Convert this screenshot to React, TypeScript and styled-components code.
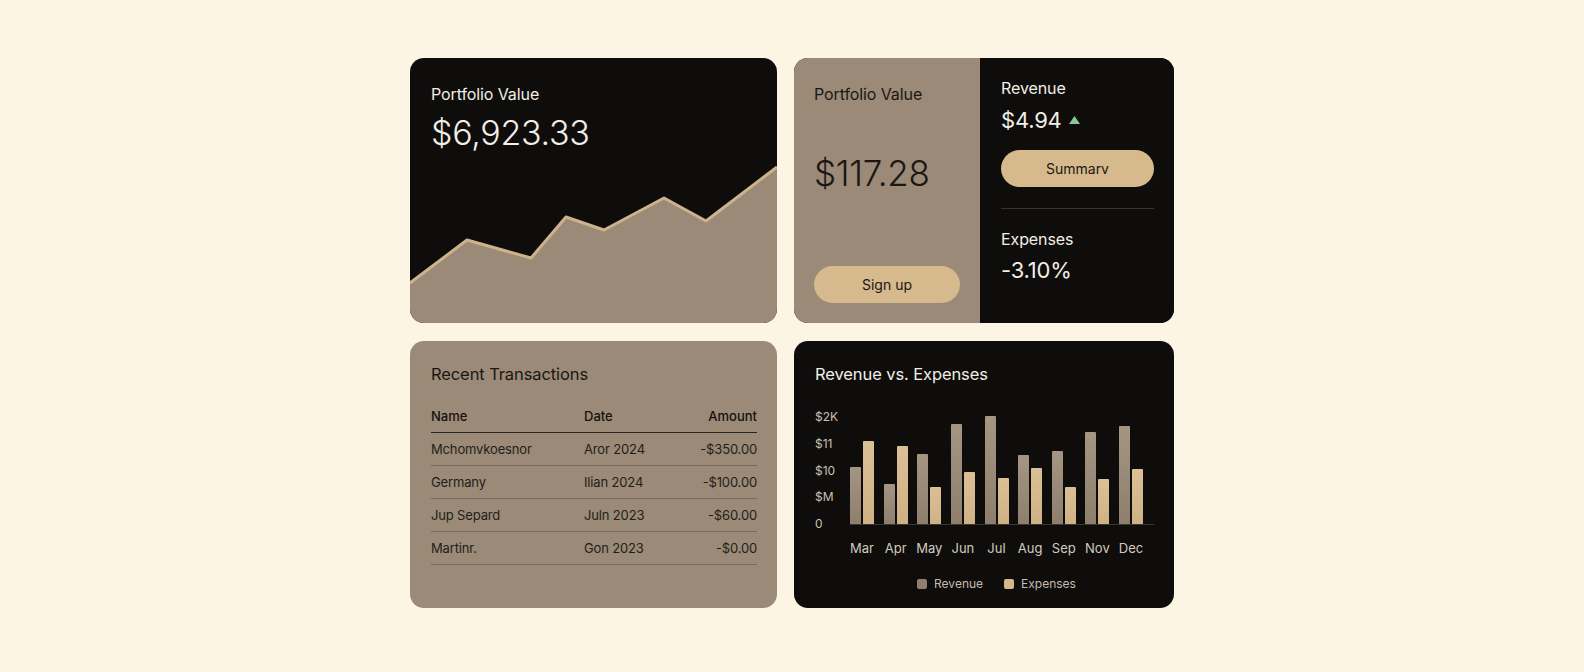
import React from 'react';
import styled, {createGlobalStyle} from 'styled-components';

const GlobalStyle = createGlobalStyle`
  body {
    margin: 0;
    background: #fcf5e4;
    font-family: Inter, "Noto Sans", "Liberation Sans", sans-serif;
    -webkit-font-smoothing: antialiased;
  }
`;

const DARK = '#0e0d0c';
const TAN = '#9a8a77';
const SAND = '#d6b98c';

const Page = styled.div`
  min-height: 672px;
  display: flex;
  justify-content: center;
  padding-top: 58px;
  box-sizing: border-box;
`;

const Grid = styled.div`
  display: grid;
  grid-template-columns: 367px 380px;
  grid-template-rows: 265px 267px;
  column-gap: 17px;
  row-gap: 18px;
`;

const Card = styled.div<{$tone: 'dark' | 'tan'}>`
  border-radius: 14px;
  overflow: hidden;
  background: ${(p) => (p.$tone === 'dark' ? DARK : TAN)};
  color: ${(p) => (p.$tone === 'dark' ? '#f2ede5' : '#1b1713')};
  display: flex;
  flex-direction: column;
`;

const Label = styled.div`
  font-size: 16px;
  line-height: 20px;
  letter-spacing: -0.1px;
`;

const BigValue = styled.div`
  font-size: 34px;
  line-height: 38px;
  font-weight: 300;
  letter-spacing: -0.3px;
`;

const MidValue = styled.div`
  font-size: 22px;
  line-height: 28px;
  font-weight: 400;
  letter-spacing: -0.2px;
  display: flex;
  align-items: center;
  gap: 7px;
`;

// portfolio card (top left)
const Head = styled.div`
  padding: 26px 21px 0;
  display: flex;
  flex-direction: column;
  gap: 10px;
`;

const AreaChart = styled.svg`
  display: block;
  width: 100%;
  height: 170px;
  margin-top: auto;
`;

// split card (top right)
const Split = styled.div`
  display: grid;
  grid-template-columns: 186px 1fr;
  height: 100%;
`;

const TanPane = styled.div`
  background: ${TAN};
  color: #1b1713;
  padding: 26px 20px 20px;
  display: flex;
  flex-direction: column;
`;

const DarkPane = styled.div`
  background: ${DARK};
  color: #f2ede5;
  padding: 20px 20px 0 21px;
  display: flex;
  flex-direction: column;
`;

const PaneValue = styled(BigValue)`
  margin-top: 48px;
  font-size: 35px;
  line-height: 42px;
  font-weight: 350;
`;

const Pill = styled.button<{$push?: boolean}>`
  height: 37px;
  width: 100%;
  border: none;
  border-radius: 999px;
  background: ${SAND};
  color: #1b1713;
  font-family: inherit;
  font-size: 14px;
  margin-top: ${(p) => (p.$push ? 'auto' : '16px')};
`;

const Divider = styled.div`
  height: 1px;
  background: #38332d;
  margin: 21px 0 20px;
`;

const Up = styled.svg`
  width: 11px;
  height: 8px;
`;

// transactions card
const Body = styled.div`
  padding: 23px 20px 0 21px;
`;

const Title = styled.div`
  font-size: 16.5px;
  line-height: 20px;
  letter-spacing: -0.1px;
`;

const Table = styled.div`
  margin-top: 24px;
`;

const Tr = styled.div<{$head?: boolean}>`
  display: grid;
  grid-template-columns: 153px 1fr auto;
  font-size: 13px;
  font-weight: ${(p) => (p.$head ? 500 : 400)};
  letter-spacing: ${(p) => (p.$head ? '0' : '-0.15px')};
  line-height: 16px;
  color: ${(p) => (p.$head ? '#16120e' : '#241e19')};
  padding: ${(p) => (p.$head ? '0 0 8px' : '8px 0')};
  border-bottom: ${(p) => (p.$head ? '1.5px solid #2b241d' : '1px solid #776a5b')};
`;

const Right = styled.span`
  text-align: right;
`;

// bar chart card
const ChartRow = styled.div`
  display: flex;
  margin-top: 26px;
`;

const YAxis = styled.div`
  width: 35px;
  height: 121px;
  display: flex;
  flex-direction: column;
  justify-content: space-between;
  font-size: 12px;
  line-height: 14px;
  color: #c9c1b5;
`;

const Plot = styled.div`
  flex: 1;
  height: 114px;
  border-bottom: 1px solid #3b352e;
  display: flex;
  align-items: flex-end;
  justify-content: space-between;
  padding-right: 11px;
`;

const Pair = styled.div`
  width: 24px;
  display: flex;
  align-items: flex-end;
  gap: 2px;
`;

const Bar = styled.div<{$tone: 'rev' | 'exp'}>`
  width: 11px;
  border-radius: 1px 1px 0 0;
  background: ${(p) =>
    p.$tone === 'rev'
      ? 'linear-gradient(#a59684, #8e7f6c)'
      : 'linear-gradient(#dcc095, #cfb185)'};
`;

const Months = styled.div`
  display: flex;
  justify-content: space-between;
  margin: 9px 0 0 35px;
  padding-right: 11px;
`;

const Month = styled.div`
  width: 24px;
  display: flex;
  justify-content: center;
  white-space: nowrap;
  font-size: 13px;
  line-height: 16px;
  color: #d3cbbf;
`;

const Legend = styled.div`
  display: flex;
  justify-content: center;
  gap: 21px;
  margin-top: 21px;
  padding-left: 24px;
`;

const LegendItem = styled.div`
  display: flex;
  align-items: center;
  gap: 7px;
  font-size: 12px;
  line-height: 14px;
  color: #c4bcb0;
`;

const Swatch = styled.span<{$tone: 'rev' | 'exp'}>`
  width: 10px;
  height: 10px;
  border-radius: 2px;
  background: ${(p) => (p.$tone === 'rev' ? '#8f806d' : '#d4b78b')};
`;

const areaPoints = '0,130 57,87 121,105 156,64 194,77 254,45 296,68 367,14';

const transactions = [
  {name: 'Mchomvkoesnor', date: 'Aror 2024', amount: '-$350.00'},
  {name: 'Germany', date: 'Ilian 2024', amount: '-$100.00'},
  {name: 'Jup Separd', date: 'Juln 2023', amount: '-$60.00'},
  {name: 'Martinr.', date: 'Gon 2023', amount: '-$0.00'},
];

const bars = [
  {m: 'Mar', rev: 57, exp: 83},
  {m: 'Apr', rev: 40, exp: 78},
  {m: 'May', rev: 70, exp: 37},
  {m: 'Jun', rev: 100, exp: 52},
  {m: 'Jul', rev: 108, exp: 46},
  {m: 'Aug', rev: 69, exp: 56},
  {m: 'Sep', rev: 73, exp: 37},
  {m: 'Nov', rev: 92, exp: 45},
  {m: 'Dec', rev: 98, exp: 55},
];

const App = () => {
  return (
    <>
      <GlobalStyle />
      <Page>
        <Grid>
          <Card $tone="dark">
            <Head>
              <Label>Portfolio Value</Label>
              <BigValue>$6,923.33</BigValue>
            </Head>
            <AreaChart viewBox="0 0 367 170" preserveAspectRatio="none">
              <polygon points={`${areaPoints} 367,170 0,170`} fill={TAN} />
              <polyline
                points={areaPoints}
                fill="none"
                stroke="#cdb38c"
                strokeWidth="3"
                strokeLinejoin="round"
              />
            </AreaChart>
          </Card>

          <Card $tone="dark">
            <Split>
              <TanPane>
                <Label>Portfolio Value</Label>
                <PaneValue>$117.28</PaneValue>
                <Pill $push>Sign up</Pill>
              </TanPane>
              <DarkPane>
                <Label>Revenue</Label>
                <MidValue style={{marginTop: 8}}>
                  $4.94
                  <Up viewBox="0 0 11 8">
                    <polygon points="5.5,0 11,8 0,8" fill="#8cc59b" />
                  </Up>
                </MidValue>
                <Pill>Summarv</Pill>
                <Divider />
                <Label>Expenses</Label>
                <MidValue style={{marginTop: 7}}>-3.10%</MidValue>
              </DarkPane>
            </Split>
          </Card>

          <Card $tone="tan">
            <Body>
              <Title>Recent Transactions</Title>
              <Table>
                <Tr $head>
                  <span>Name</span>
                  <span>Date</span>
                  <Right>Amount</Right>
                </Tr>
                {transactions.map((t) => (
                  <Tr key={t.name}>
                    <span>{t.name}</span>
                    <span>{t.date}</span>
                    <Right>{t.amount}</Right>
                  </Tr>
                ))}
              </Table>
            </Body>
          </Card>

          <Card $tone="dark">
            <Body>
              <Title>Revenue vs. Expenses</Title>
              <ChartRow>
                <YAxis>
                  <span>$2K</span>
                  <span>$11</span>
                  <span>$10</span>
                  <span>$M</span>
                  <span>0</span>
                </YAxis>
                <Plot>
                  {bars.map((b) => (
                    <Pair key={b.m}>
                      <Bar $tone="rev" style={{height: b.rev}} />
                      <Bar $tone="exp" style={{height: b.exp}} />
                    </Pair>
                  ))}
                </Plot>
              </ChartRow>
              <Months>
                {bars.map((b) => (
                  <Month key={b.m}>{b.m}</Month>
                ))}
              </Months>
              <Legend>
                <LegendItem>
                  <Swatch $tone="rev" />
                  Revenue
                </LegendItem>
                <LegendItem>
                  <Swatch $tone="exp" />
                  Expenses
                </LegendItem>
              </Legend>
            </Body>
          </Card>
        </Grid>
      </Page>
    </>
  );
};

export default App;
